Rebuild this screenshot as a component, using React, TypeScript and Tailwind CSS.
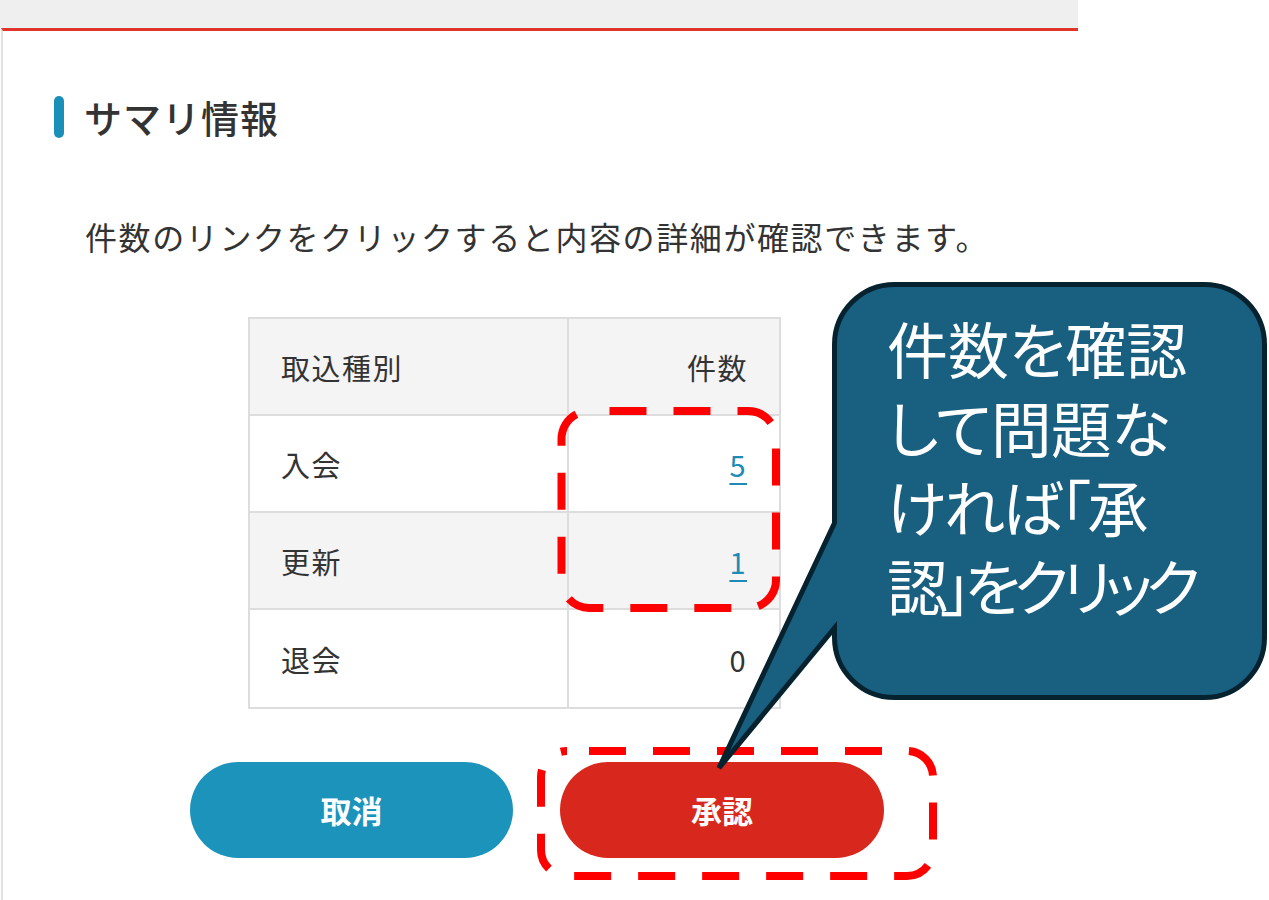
const rows = [
  { type: '入会', count: 5, link: true, striped: false },
  { type: '更新', count: 1, link: true, striped: true },
  { type: '退会', count: 0, link: false, striped: false },
];

function SummaryTable() {
  return (
    <div className="ml-[194px] mt-[61px] w-[533px] border-2 border-[#dddddd] text-[29px] leading-[40px] tracking-[1.5px]">
      {/* header */}
      <div className="flex h-[97px] border-b-2 border-[#dddddd] bg-[#f4f4f4]">
        <div className="flex w-[319px] items-center border-r-2 border-[#dddddd] pl-[31px]">取込種別</div>
        <div className="flex flex-1 items-center justify-end pr-[31px]">件数</div>
      </div>
      {rows.map((row, i) => (
        <div
          key={row.type}
          className={
            'flex h-[97px] ' +
            (i < rows.length - 1 ? 'border-b-2 border-[#dddddd] ' : '') +
            (row.striped ? 'bg-[#f4f4f4]' : 'bg-white')
          }
        >
          <div className="flex w-[319px] items-center border-r-2 border-[#dddddd] pl-[31px]">{row.type}</div>
          <div className="flex flex-1 items-center justify-end pr-[32px]">
            {row.link ? (
              <a className="text-[#1d8bb6] underline decoration-2 underline-offset-[6px]">{row.count}</a>
            ) : (
              <span>{row.count}</span>
            )}
          </div>
        </div>
      ))}
    </div>
  );
}

// annotation layer: dashed highlights and the speech bubble
function Annotations() {
  return (
    <div className="pointer-events-none absolute inset-0">
      <svg width="1269" height="900" className="absolute left-0 top-0">
        <rect x="561.5" y="411" width="214.5" height="197" rx="28" fill="none" stroke="#ff0000" strokeWidth="8" strokeDasharray="37 27" strokeDashoffset="-20" />
        <rect x="541" y="751" width="392" height="125" rx="26" fill="none" stroke="#ff0000" strokeWidth="8" strokeDasharray="37 27" strokeDashoffset="-22" />
        <path
          d="M 894.5 284.5 H 1204.5 A 60 60 0 0 1 1264.5 344.5 V 637.5 A 60 60 0 0 1 1204.5 697.5 H 894.5 A 60 60 0 0 1 834.5 637.5 V 628 L 719 768 L 834.5 523 V 344.5 A 60 60 0 0 1 894.5 284.5 Z"
          fill="#185f80"
          stroke="#07222f"
          strokeWidth="5"
        />
      </svg>
      <div className="absolute left-[887px] top-[308px] text-[61px] leading-[79px] text-white [font-feature-settings:'palt']">
        <div>件数を確認</div>
        <div className="tracking-[-1px]">して問題な</div>
        <div className="tracking-[-3px]">ければ「承</div>
        <div className="tracking-[-7px]">認」をクリック</div>
      </div>
    </div>
  );
}

export default function App() {
  return (
    <div className="relative h-[900px] w-[1269px] overflow-hidden bg-white font-['Noto_Sans_CJK_JP',sans-serif] text-[#333333]">
      <div className="flex h-full w-[1078px] flex-col">
        <div className="h-[28px] border-b border-[#e6f5f7] bg-[#efefef]" />
        <div className="ml-px flex-1 border-l-2 border-t-[3px] border-l-[#e2e2e2] border-t-[#e3342b] pl-[51px] pt-[65px]">
          {/* section heading */}
          <div className="flex h-[42px] items-center gap-[20px]">
            <div className="h-[42px] w-[10px] rounded-full bg-[#1a8fb8]" />
            <h2 className="text-[38px] font-medium leading-[42px] tracking-[1px]">サマリ情報</h2>
          </div>

          <p className="ml-[31px] mt-[78px] text-[32px] leading-[40px] tracking-[1.6px]">
            件数のリンクをクリックすると内容の詳細が確認できます。
          </p>

          <SummaryTable />

          <div className="ml-[136px] mt-[53px] flex gap-[47px]">
            <button className="h-[96px] w-[323px] rounded-full bg-[#1b93bb] text-[31px] font-bold text-white">取消</button>
            <button className="h-[96px] w-[324px] rounded-full bg-[#d8271c] text-[31px] font-bold text-white">承認</button>
          </div>
        </div>
      </div>
      <Annotations />
    </div>
  );
}
